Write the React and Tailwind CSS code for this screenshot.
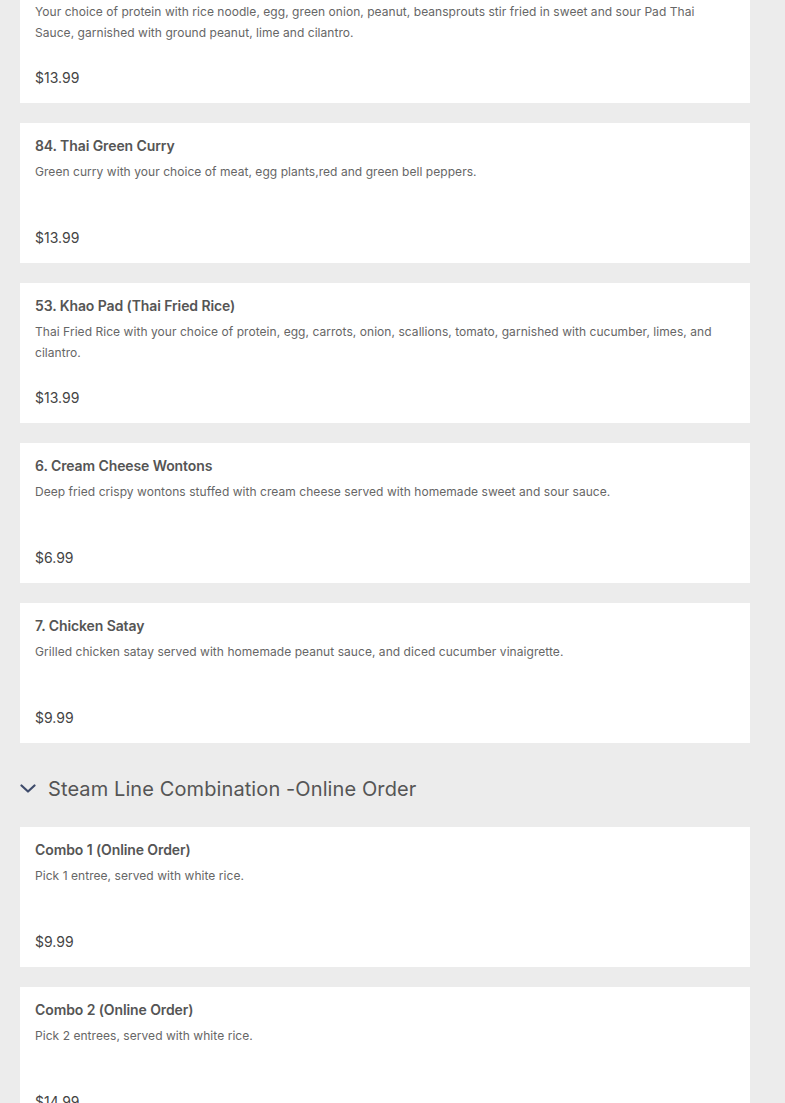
import React from "react";

const font = { fontFamily: "Inter, 'Noto Sans', sans-serif" };

function Card({ title, desc, price }) {
  return (
    <div className="bg-white h-[140px] flex flex-col px-[15px] pt-[13px] pb-[15px]">
      <div className="text-[14px] leading-[20px] font-semibold text-[#555555] tracking-[-0.1px]">{title}</div>
      <div className="mt-[5px] text-[12px] leading-[21px] text-[#666666] tracking-[0.05px]">{desc}</div>
      <div className="mt-auto text-[14px] leading-[20px] text-[#444444]">{price}</div>
    </div>
  );
}

export default function App() {
  const group1 = [
    {
      title: "81. Pad Thai",
      desc: "Your choice of protein with rice noodle, egg,  green onion, peanut, beansprouts stir fried in sweet and sour Pad Thai Sauce, garnished with ground peanut, lime and cilantro.",
      price: "$13.99",
    },
    {
      title: "84. Thai Green Curry",
      desc: "Green curry with your choice of meat, egg plants,red and green bell peppers.",
      price: "$13.99",
    },
    {
      title: "53. Khao Pad (Thai Fried Rice)",
      desc: "Thai Fried Rice with your choice of protein, egg, carrots, onion, scallions, tomato, garnished with cucumber, limes, and cilantro.",
      price: "$13.99",
    },
    {
      title: "6. Cream Cheese Wontons",
      desc: "Deep fried crispy wontons stuffed with cream cheese served with homemade sweet and sour sauce.",
      price: "$6.99",
    },
    {
      title: "7. Chicken Satay",
      desc: "Grilled chicken satay served with homemade peanut sauce, and diced cucumber vinaigrette.",
      price: "$9.99",
    },
  ];
  const group2 = [
    { title: "Combo 1 (Online Order)", desc: "Pick 1 entree, served with white rice.", price: "$9.99" },
    { title: "Combo 2 (Online Order)", desc: "Pick 2 entrees, served with white rice.", price: "$14.99" },
  ];
  return (
    <div className="bg-[#ececec] h-[1103px] overflow-hidden" style={font}>
      <div className="-mt-[37px] pl-[20px] pr-[35px]">
        <div className="flex flex-col gap-[20px]">
          {group1.map((c) => (
            <Card key={c.title} {...c} />
          ))}
        </div>
        <div className="flex items-center h-[84px] pt-[7px] gap-[12px]">
          <svg width="16" height="10" viewBox="0 0 16 10" className="shrink-0">
            <path d="M1.5 1.5 L8 7.5 L14.5 1.5" fill="none" stroke="#3e4b6b" strokeWidth="2.2" strokeLinecap="round" strokeLinejoin="round" />
          </svg>
          <div className="text-[20px] leading-[28px] text-[#555555] tracking-[0.1px]">Steam Line Combination -Online Order</div>
        </div>
        <div className="flex flex-col gap-[20px]">
          {group2.map((c) => (
            <Card key={c.title} {...c} />
          ))}
        </div>
      </div>
    </div>
  );
}
